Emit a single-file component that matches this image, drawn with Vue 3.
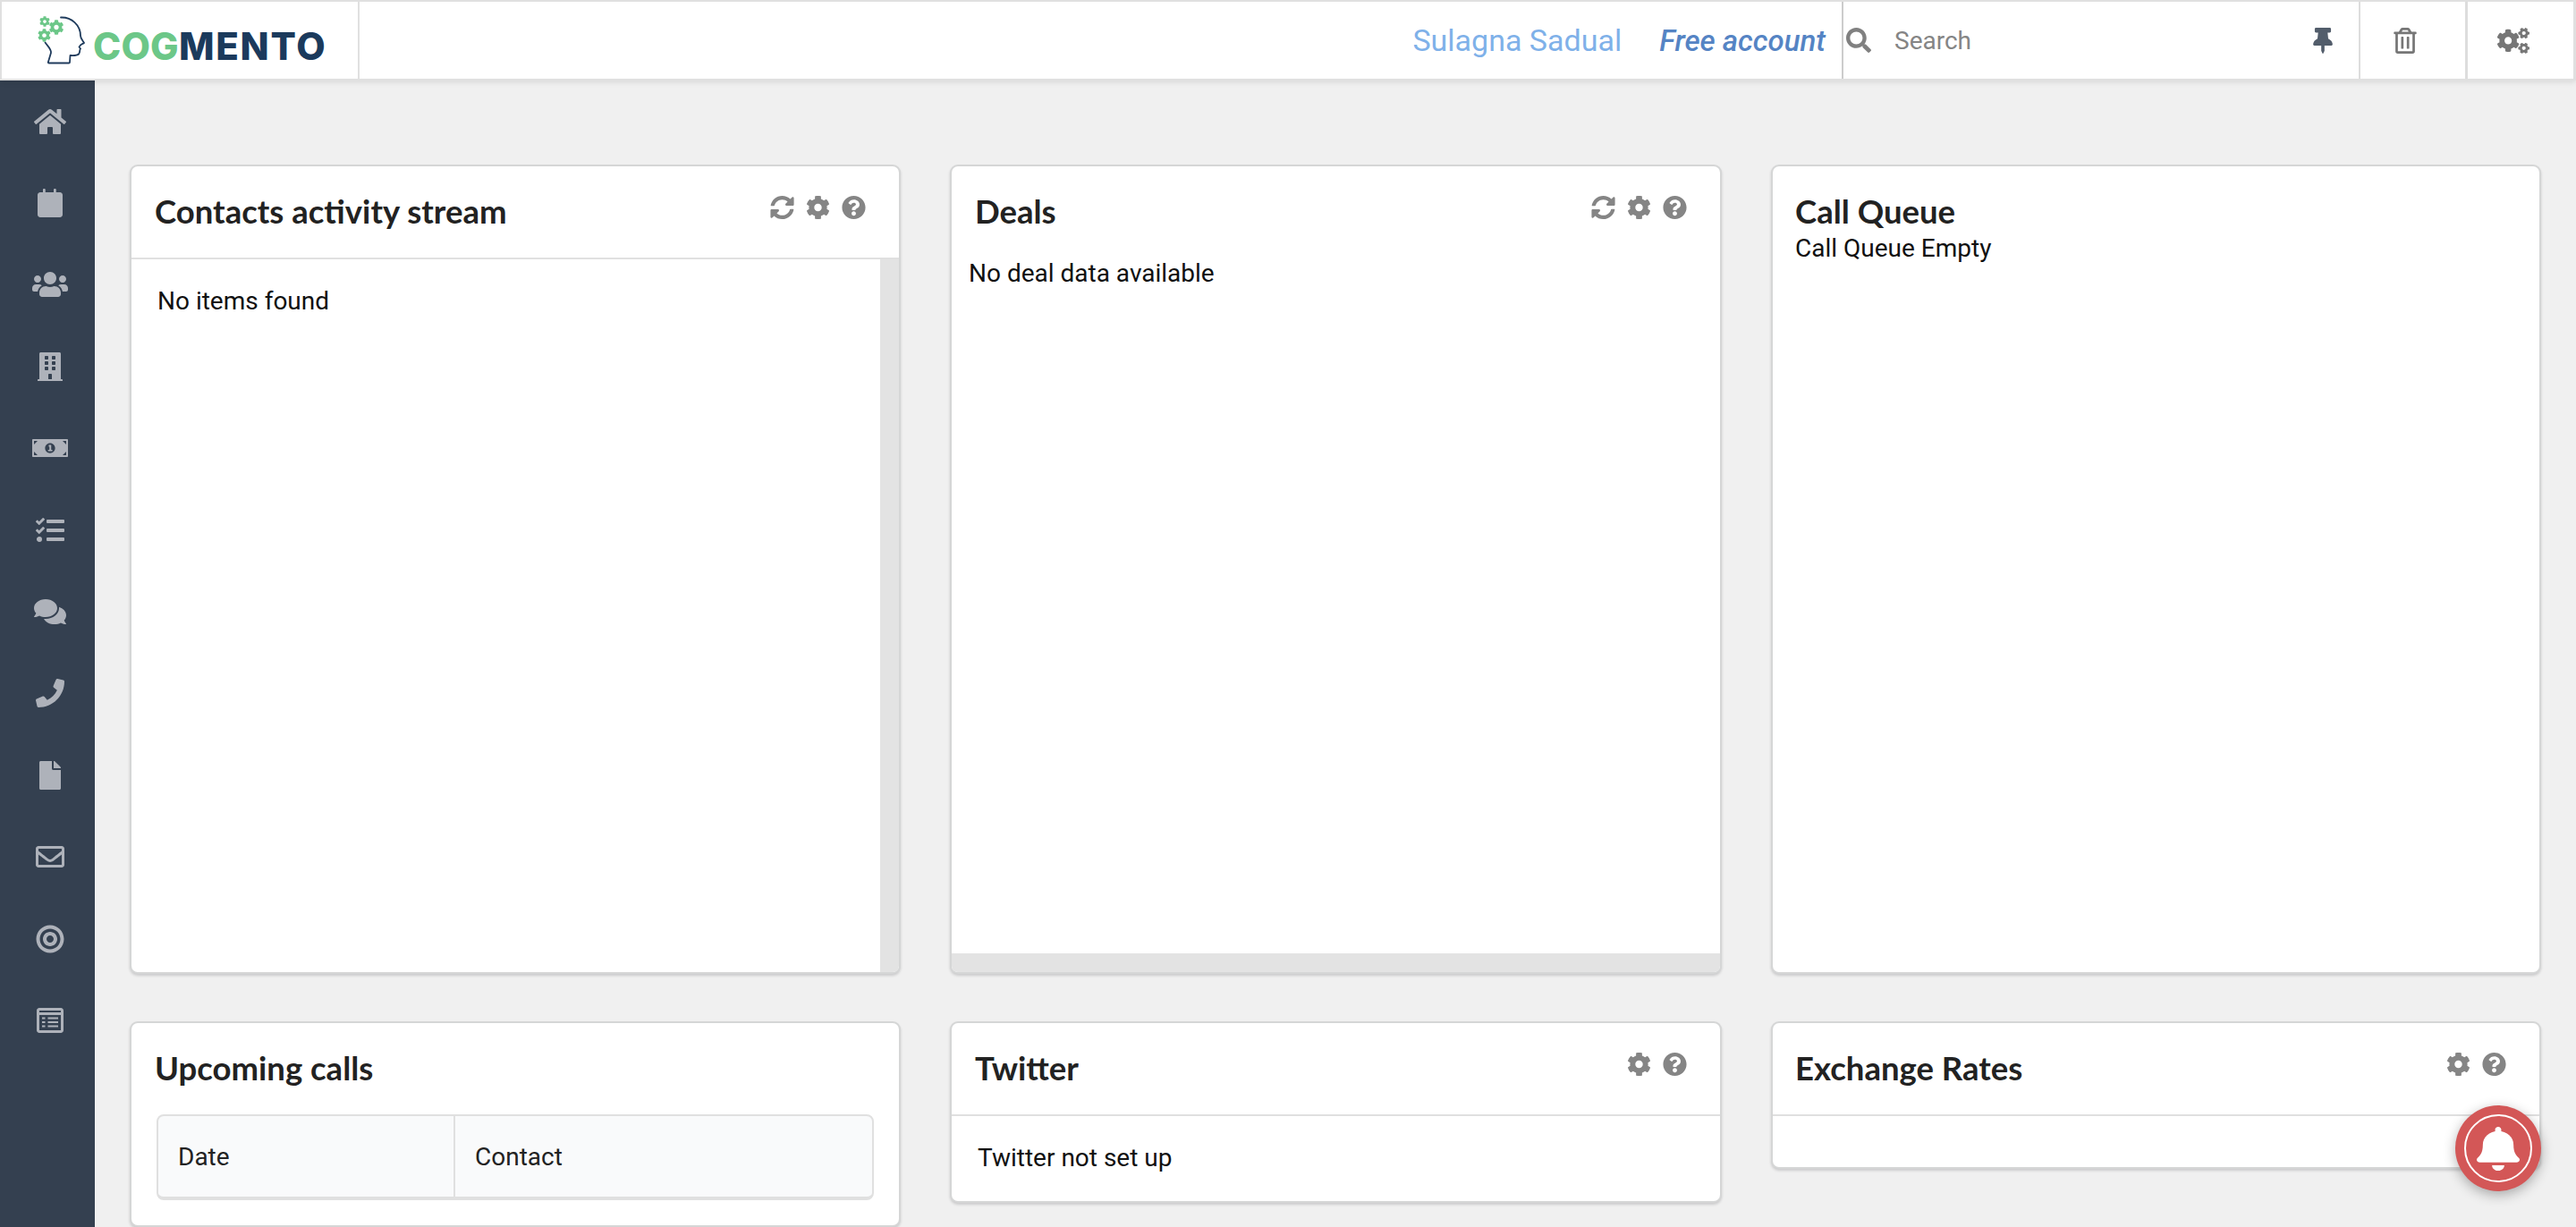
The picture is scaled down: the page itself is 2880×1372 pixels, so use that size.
<script setup>
const p = {
  home: [576, 'M280.37 148.26L96 300.11V464a16 16 0 0 0 16 16l112.06-.29a16 16 0 0 0 15.92-16V368a16 16 0 0 1 16-16h64a16 16 0 0 1 16 16v95.64a16 16 0 0 0 16 16.05L464 480a16 16 0 0 0 16-16V300L295.67 148.26a12.19 12.19 0 0 0-15.3 0zM571.6 251.47L488 182.56V44.05a12 12 0 0 0-12-12h-56a12 12 0 0 0-12 12v72.61L318.47 43a48 48 0 0 0-61 0L4.34 251.47a12 12 0 0 0-1.6 16.9l25.5 31A12 12 0 0 0 45.15 301l235.22-193.74a12.19 12.19 0 0 1 15.3 0L530.9 301a12 12 0 0 0 16.9-1.6l25.5-31a12 12 0 0 0-1.7-16.93z'],
  calendar: [448, 'M0 112c0-26.5 21.5-48 48-48h48V14c0-8 6-14 14-14h16c8 0 14 6 14 14v50h148V14c0-8 6-14 14-14h16c8 0 14 6 14 14v50h68c26.5 0 48 21.5 48 48v352c0 26.5-21.5 48-48 48H48c-26.5 0-48-21.5-48-48z'],
  users: [640, 'M96 224c35.3 0 64-28.7 64-64s-28.7-64-64-64-64 28.7-64 64 28.7 64 64 64zm448 0c35.3 0 64-28.7 64-64s-28.7-64-64-64-64 28.7-64 64 28.7 64 64 64zm32 32h-64c-17.6 0-33.5 7.1-45.1 18.6 40.3 22.1 68.9 62 75.1 109.4h66c17.7 0 32-14.3 32-32v-32c0-35.3-28.7-64-64-64zm-256 0c61.9 0 112-50.1 112-112S381.9 32 320 32 208 82.1 208 144s50.1 112 112 112zm76.8 32h-8.3c-20.8 10-43.9 16-68.5 16s-47.6-6-68.5-16h-8.3C179.6 288 128 339.6 128 403.2V432c0 26.5 21.5 48 48 48h288c26.5 0 48-21.5 48-48v-28.8c0-63.6-51.6-115.2-115.2-115.2zm-223.7-13.4C161.5 263.1 145.6 256 128 256H64c-35.3 0-64 28.7-64 64v32c0 17.7 14.3 32 32 32h65.9c6.3-47.4 34.9-87.3 75.2-109.4z'],
  building: [448, 'M436 480h-20V24c0-13.3-10.7-24-24-24H56C42.7 0 32 10.7 32 24v456H12c-6.6 0-12 5.4-12 12v20h448v-20c0-6.6-5.4-12-12-12zM128 76c0-6.6 5.4-12 12-12h40c6.6 0 12 5.4 12 12v40c0 6.6-5.4 12-12 12h-40c-6.6 0-12-5.4-12-12V76zm0 96c0-6.6 5.4-12 12-12h40c6.6 0 12 5.4 12 12v40c0 6.6-5.4 12-12 12h-40c-6.6 0-12-5.4-12-12v-40zm52 148h-40c-6.6 0-12-5.4-12-12v-40c0-6.6 5.4-12 12-12h40c6.6 0 12 5.4 12 12v40c0 6.6-5.4 12-12 12zm76 160h-64v-84c0-6.6 5.4-12 12-12h40c6.6 0 12 5.4 12 12v84zm64-172c0 6.6-5.4 12-12 12h-40c-6.6 0-12-5.4-12-12v-40c0-6.6 5.4-12 12-12h40c6.6 0 12 5.4 12 12v40zm0-96c0 6.6-5.4 12-12 12h-40c-6.6 0-12-5.4-12-12v-40c0-6.6 5.4-12 12-12h40c6.6 0 12 5.4 12 12v40zm0-96c0 6.6-5.4 12-12 12h-40c-6.6 0-12-5.4-12-12V76c0-6.6 5.4-12 12-12h40c6.6 0 12 5.4 12 12v40z'],
  money: [640, 'M16 96h608c8.800 0 16 7.200 16 16v288c0 8.800-7.200 16-16 16H16c-8.800 0-16-7.200-16-16V112c0-8.800 7.200-16 16-16zM32 128v64l32-32 32-32zM608 128h-64l32 32 32 32zM32 384h64l-32-32-32-32zM608 384v-64l-32 32-32 32zM320 166c-50 0-90 40-90 90s40 90 90 90 90-40 90-90-40-90-90-90zM296 200h44v88h20v24h-76v-24h24v-56h-12z'],
  tasks: [512, 'M139.61 35.5a12 12 0 0 0-17 0L58.93 98.81l-22.7-22.12a12 12 0 0 0-17 0L3.53 92.41a12 12 0 0 0 0 17l47.59 47.4a12.78 12.78 0 0 0 17.61 0l15.59-15.62L156.52 69a12.09 12.09 0 0 0 .09-17zm0 159.19a12 12 0 0 0-17 0l-63.68 63.72-22.7-22.1a12 12 0 0 0-17 0L3.53 252a12 12 0 0 0 0 17L51 316.5a12.77 12.77 0 0 0 17.6 0l15.7-15.69 72.2-72.22a12 12 0 0 0 .09-16.9zM64 368c-26.49 0-48.59 21.5-48.59 48S37.53 464 64 464a48 48 0 0 0 0-96zm432 16H208a16 16 0 0 0-16 16v32a16 16 0 0 0 16 16h288a16 16 0 0 0 16-16v-32a16 16 0 0 0-16-16zm0-320H208a16 16 0 0 0-16 16v32a16 16 0 0 0 16 16h288a16 16 0 0 0 16-16V80a16 16 0 0 0-16-16zm0 160H208a16 16 0 0 0-16 16v32a16 16 0 0 0 16 16h288a16 16 0 0 0 16-16v-32a16 16 0 0 0-16-16z'],
  comments: [576, 'M416 192c0-88.4-93.1-160-208-160S0 103.6 0 192c0 34.3 14.1 65.9 38 92-13.4 30.2-35.5 54.2-35.8 54.5-2.2 2.3-2.8 5.7-1.5 8.7S4.8 352 8 352c36.6 0 66.9-12.3 88.7-25 32.2 15.7 70.3 25 111.3 25 114.9 0 208-71.6 208-160zm122 220c23.9-26 38-57.7 38-92 0-66.9-53.5-124.2-129.3-148.1.9 6.6 1.3 13.3 1.3 20.1 0 105.9-107.7 192-240 192-10.8 0-21.3-.8-31.7-1.9C207.8 439.6 281.8 480 368 480c41 0 79.1-9.2 111.3-25 21.8 12.7 52.1 25 88.7 25 3.2 0 6.1-1.9 7.3-4.8 1.3-2.9.7-6.3-1.5-8.7-.3-.3-22.4-24.2-35.8-54.5z'],
  phone: [512, 'M493.4 24.6l-104-24c-11.3-2.6-22.9 3.3-27.5 13.9l-48 112c-4.2 9.8-1.4 21.3 6.9 28l60.6 49.6c-36 76.7-98.9 140.5-177.2 177.2l-49.6-60.6c-6.8-8.3-18.2-11.1-28-6.9l-112 48C3.9 366.5-2 378.1.6 389.4l24 104C27.1 504.2 36.7 512 48 512c256.1 0 464-207.5 464-464 0-11.2-7.7-20.9-18.6-23.4z'],
  file: [384, 'M224 136V0H24C10.7 0 0 10.7 0 24v464c0 13.3 10.7 24 24 24h336c13.3 0 24-10.7 24-24V160H248c-13.2 0-24-10.8-24-24zm160-14.1v6.1H256V0h6.1c6.4 0 12.5 2.5 17 7l97.9 98c4.500 4.500 7 10.600 7 16.900z'],
  envelope: [512, 'M464 64H48C21.49 64 0 85.49 0 112v288c0 26.51 21.49 48 48 48h416c26.51 0 48-21.49 48-48V112c0-26.51-21.49-48-48-48zm0 48v40.805c-22.422 18.259-58.168 46.651-134.587 106.49-16.841 13.247-50.201 45.072-73.413 44.701-23.208.375-56.579-31.459-73.413-44.701C106.18 199.465 70.425 171.067 48 152.805V112h416zM48 400V214.398c22.914 18.251 55.409 43.862 104.938 82.646 21.857 17.205 60.134 55.186 103.062 54.955 42.717.231 80.509-37.199 103.053-54.947 49.528-38.783 82.032-64.401 104.947-82.653V400H48z'],
  bullseye: [512, 'M256 8C119 8 8 119 8 256s111 248 248 248 248-111 248-248S393 8 256 8zm0 432c-101.700 0-184-82.300-184-184S154.300 72 256 72s184 82.300 184 184-82.300 184-184 184zm0-312c-70.700 0-128 57.300-128 128s57.300 128 128 128 128-57.300 128-128-57.300-128-128-128zm0 192c-35.300 0-64-28.700-64-64s28.700-64 64-64 64 28.700 64 64-28.700 64-64 64z'],
  form: [512, 'M64 32h384c26.500 0 48 21.500 48 48v352c0 26.500-21.500 48-48 48H64c-26.500 0-48-21.500-48-48V80c0-26.500 21.500-48 48-48zm0 48v32h384V80zm0 80v272h384V160zm48 40h56v32h-56zm104 0h184v32H216zM112 272h56v32h-56zm104 0h184v32H216zM112 344h56v32h-56zm104 0h184v32H216z'],
  pin: [384, 'M298.028 214.267L285.793 96H328c13.255 0 24-10.745 24-24V24c0-13.255-10.745-24-24-24H56C42.745 0 32 10.745 32 24v48c0 13.255 10.745 24 24 24h42.207L85.972 214.267C37.465 236.82 0 277.261 0 328c0 13.255 10.745 24 24 24h136v104.007c0 1.242.289 2.467.845 3.578l24 48c2.941 5.882 11.364 5.893 14.311 0l24-48a8.008 8.008 0 0 0 .845-3.578V352h136c13.255 0 24-10.745 24-24-.001-51.183-37.983-91.42-85.973-113.733z'],
  trash: [448, 'M268 416h24a12 12 0 0 0 12-12V188a12 12 0 0 0-12-12h-24a12 12 0 0 0-12 12v216a12 12 0 0 0 12 12zM432 80h-82.410l-34-56.700A48 48 0 0 0 274.410 0H173.590a48 48 0 0 0-41.160 23.300L98.410 80H16A16 16 0 0 0 0 96v16a16 16 0 0 0 16 16h16v336a48 48 0 0 0 48 48h288a48 48 0 0 0 48-48V128h16a16 16 0 0 0 16-16V96a16 16 0 0 0-16-16zM171.840 50.910A6 6 0 0 1 177 48h94a6 6 0 0 1 5.150 2.910L293.610 80H154.390zM368 464H80V128h288zm-212-48h24a12 12 0 0 0 12-12V188a12 12 0 0 0-12-12h-24a12 12 0 0 0-12 12v216a12 12 0 0 0 12 12z'],
  cogs: [640, 'M512.1 191l-8.2 14.3c-3 5.3-9.4 7.500-15.100 5.400-11.800-4.400-22.600-10.700-32.100-18.600-4.600-3.800-5.800-10.500-2.800-15.700l8.200-14.300c-6.900-8-12.300-17.300-15.900-27.400h-16.500c-6 0-11.200-4.300-12.200-10.300-2-12-2.100-24.600 0-37.100 1-6 6.200-10.400 12.200-10.400h16.500c3.600-10.100 9-19.400 15.900-27.400l-8.200-14.300c-3-5.200-1.900-11.900 2.800-15.700 9.500-7.900 20.400-14.200 32.100-18.600 5.700-2.100 12.100.1 15.100 5.400l8.200 14.300c10.500-1.900 21.200-1.900 31.700 0L552 6.300c3-5.300 9.400-7.500 15.100-5.400 11.800 4.400 22.600 10.700 32.100 18.600 4.600 3.800 5.800 10.500 2.800 15.700l-8.200 14.300c6.900 8 12.300 17.300 15.900 27.400h16.500c6 0 11.200 4.300 12.200 10.300 2 12 2.100 24.600 0 37.100-1 6-6.200 10.400-12.200 10.400h-16.500c-3.600 10.100-9 19.400-15.900 27.400l8.200 14.300c3 5.200 1.900 11.900-2.800 15.700-9.500 7.900-20.400 14.200-32.100 18.600-5.700 2.100-12.100-.1-15.100-5.400l-8.200-14.300c-10.400 1.900-21.200 1.900-31.700 0zm-10.500-58.800c38.500 29.600 82.400-14.300 52.800-52.800-38.500-29.700-82.400 14.300-52.800 52.800zM386.300 286.100l33.700 16.800c10.100 5.800 14.500 18.100 10.500 29.100-8.900 24.200-26.400 46.400-42.600 65.800-7.400 8.900-20.200 11.100-30.300 5.300l-29.100-16.800c-16 13.700-34.600 24.600-54.900 31.700v33.600c0 11.600-8.300 21.600-19.700 23.600-24.600 4.200-50.400 4.400-75.900 0-11.500-2-20-11.900-20-23.600V418c-20.300-7.200-38.900-18-54.900-31.700L74 403c-10 5.800-22.900 3.600-30.300-5.300-16.200-19.400-33.300-41.600-42.200-65.700-4-10.900.4-23.200 10.500-29.100l33.300-16.800c-3.900-20.900-3.900-42.400 0-63.400L12 205.800c-10.100-5.800-14.600-18.100-10.500-29 8.900-24.200 26-46.400 42.200-65.800 7.400-8.900 20.200-11.100 30.300-5.300l29.100 16.800c16-13.700 34.600-24.600 54.900-31.700V57.100c0-11.500 8.200-21.500 19.600-23.500 24.600-4.200 50.500-4.400 76-.1 11.500 2 20 11.900 20 23.600v33.600c20.300 7.200 38.900 18 54.900 31.700l29.100-16.800c10-5.800 22.900-3.600 30.300 5.300 16.200 19.400 33.200 41.600 42.100 65.800 4 10.900.1 23.200-10 29.100l-33.700 16.800c3.900 21 3.900 42.500 0 63.500zm-117.600 21.100c59.200-77-28.700-164.900-105.700-105.700-59.200 77 28.700 164.900 105.700 105.700zm243.400 182.700l-8.200 14.300c-3 5.300-9.400 7.500-15.100 5.400-11.800-4.400-22.600-10.700-32.100-18.600-4.600-3.800-5.800-10.500-2.800-15.700l8.200-14.300c-6.900-8-12.300-17.300-15.900-27.400h-16.500c-6 0-11.200-4.300-12.200-10.300-2-12-2.100-24.600 0-37.100 1-6 6.200-10.400 12.200-10.400h16.500c3.600-10.100 9-19.400 15.900-27.400l-8.200-14.300c-3-5.200-1.900-11.900 2.800-15.700 9.500-7.900 20.400-14.200 32.100-18.600 5.700-2.100 12.100.1 15.100 5.400l8.200 14.300c10.500-1.900 21.200-1.900 31.700 0l8.200-14.300c3-5.300 9.400-7.500 15.100-5.400 11.800 4.400 22.600 10.700 32.100 18.600 4.600 3.800 5.800 10.500 2.800 15.700l-8.200 14.300c6.900 8 12.300 17.300 15.900 27.400h16.500c6 0 11.200 4.300 12.200 10.300 2 12 2.100 24.600 0 37.100-1 6-6.200 10.400-12.200 10.400h-16.500c-3.600 10.100-9 19.400-15.900 27.400l8.200 14.300c3 5.200 1.900 11.900-2.800 15.700-9.500 7.900-20.400 14.200-32.100 18.600-5.700 2.100-12.100-.1-15.100-5.400l-8.200-14.300c-10.400 1.900-21.200 1.900-31.700 0zM501.600 431c38.500 29.600 82.400-14.300 52.800-52.800-38.500-29.600-82.400 14.300-52.800 52.800z'],
  sync: [512, 'M370.720 133.280C339.458 104.008 298.888 87.962 255.848 88c-77.458.068-144.328 53.178-162.791 126.850-1.344 5.363-6.122 9.150-11.651 9.150H24.103c-7.498 0-13.194-6.807-11.807-14.176C33.933 94.924 134.813 8 256 8c66.448 0 126.791 26.136 171.315 68.685L463.030 40.970C478.149 25.851 504 36.559 504 57.941V192c0 13.255-10.745 24-24 24H345.941c-21.382 0-32.090-25.851-16.971-40.971l41.750-41.749zM32 296h134.059c21.382 0 32.090 25.851 16.971 40.971l-41.750 41.750c31.262 29.273 71.835 45.319 114.876 45.280 77.418-.07 144.315-53.144 162.787-126.849 1.344-5.363 6.122-9.150 11.651-9.150h57.304c7.498 0 13.194 6.807 11.807 14.176C478.067 417.076 377.187 504 256 504c-66.448 0-126.791-26.136-171.315-68.685L48.970 471.030C33.851 486.149 8 475.441 8 454.059V320c0-13.255 10.745-24 24-24z'],
  cog: [512, 'M487.400 315.700l-42.600-24.600c4.300-23.200 4.300-47 0-70.200l42.600-24.600c4.900-2.800 7.100-8.600 5.500-14-11.100-35.600-30-67.800-54.700-94.600-3.800-4.100-10-5.100-14.800-2.300L380.800 110c-17.900-15.400-38.500-27.300-60.800-35.100V25.800c0-5.600-3.900-10.500-9.400-11.700-36.700-8.200-74.300-7.800-109.200 0-5.500 1.200-9.400 6.100-9.400 11.700V75c-22.200 7.900-42.800 19.800-60.800 35.100L88.700 85.500c-4.900-2.800-11-1.900-14.800 2.300-24.700 26.700-43.600 58.900-54.700 94.600-1.700 5.400.6 11.200 5.500 14L67.300 221c-4.300 23.200-4.300 47 0 70.200l-42.600 24.600c-4.900 2.800-7.100 8.600-5.500 14 11.100 35.600 30 67.800 54.700 94.600 3.800 4.100 10 5.100 14.800 2.300l42.600-24.600c17.900 15.400 38.500 27.300 60.800 35.100v49.200c0 5.600 3.900 10.500 9.400 11.700 36.700 8.200 74.300 7.800 109.200 0 5.500-1.200 9.400-6.100 9.400-11.700v-49.200c22.200-7.900 42.800-19.800 60.800-35.100l42.600 24.600c4.900 2.800 11 1.900 14.800-2.300 24.700-26.700 43.600-58.900 54.700-94.600 1.500-5.500-.7-11.300-5.600-14.100zM256 336c-44.100 0-80-35.900-80-80s35.900-80 80-80 80 35.900 80 80-35.900 80-80 80z'],
  help: [512, 'M504 256c0 136.997-111.043 248-248 248S8 392.997 8 256C8 119.083 119.043 8 256 8s248 111.083 248 248zM262.655 90c-54.497 0-89.255 22.957-116.549 63.758-3.536 5.286-2.353 12.415 2.715 16.258l34.699 26.310c5.205 3.947 12.621 3.008 16.665-2.122 17.864-22.658 30.113-35.797 57.303-35.797 20.429 0 45.698 13.148 45.698 32.958 0 14.976-12.363 22.667-32.534 33.976C247.128 238.528 216 254.941 216 296v4c0 6.627 5.373 12 12 12h56c6.627 0 12-5.373 12-12v-1.333c0-28.462 83.186-29.647 83.186-106.667 0-58.002-60.165-102-116.531-102zM256 338c-25.365 0-46 20.635-46 46 0 25.364 20.635 46 46 46s46-20.636 46-46c0-25.365-20.635-46-46-46z'],
  search: [512, 'M505 442.700L405.300 343c-4.500-4.500-10.600-7-17-7H372c27.600-35.300 44-79.700 44-128C416 93.100 322.900 0 208 0S0 93.100 0 208s93.100 208 208 208c48.300 0 92.700-16.400 128-44v16.300c0 6.400 2.500 12.500 7 17l99.700 99.700c9.400 9.400 24.600 9.400 33.900 0l28.300-28.300c9.400-9.400 9.400-24.600.1-34zM208 336c-70.700 0-128-57.200-128-128 0-70.700 57.200-128 128-128 70.700 0 128 57.200 128 128 0 70.700-57.200 128-128 128z'],
  bell: [448, 'M224 512c35.320 0 63.970-28.650 63.970-64H160.030c0 35.350 28.650 64 63.970 64zm215.390-149.710c-19.320-20.760-55.470-51.990-55.470-154.290 0-77.700-54.480-139.900-127.940-155.160V32c0-17.670-14.320-32-31.980-32s-31.980 14.330-31.980 32v20.840C118.560 68.100 64.080 130.300 64.080 208c0 102.300-36.150 133.530-55.470 154.290-6 6.450-8.660 14.160-8.610 21.710.11 16.400 12.980 32 32.100 32h383.800c19.120 0 32-15.600 32.100-32 .05-7.550-2.610-15.270-8.610-21.710z']
}
const navIcons = ['home', 'calendar', 'users', 'building', 'money', 'tasks', 'comments', 'phone', 'file', 'envelope', 'bullseye', 'form']
const gears = [
  { x: 54.500, y: 22, s: 17 },
  { x: 44, y: 18, s: 12 },
  { x: 42, y: 32, s: 15 }
]
const vb = (n) => `0 0 ${p[n][0]} 512`
</script>

<template>
  <div class="app">
    <header class="topbar">
      <div class="brand">
        <svg class="head" viewBox="40 14 60 60" width="60" height="60">
          <path d="M68 19.500C80 19 90 28 90 40C90 43 93 46 94 48C93 49 90.500 49.500 90 50.500L88.500 52.500L90 54.500C88.500 55.500 90 58.500 88 60.500C86 62.500 81 62 78.500 62L78 69.500C78 70 77.500 70.500 77 70.500L55 70.500C54 70.500 53.500 70 54 69L57 59C57.500 55 53.500 52 50.500 47.500" fill="none" stroke="#1f3b5c" stroke-width="1.800" stroke-linecap="round" stroke-linejoin="round" />
          <svg v-for="g in gears" :key="g.x + g.y" :x="g.x" :y="g.y" :width="g.s" :height="g.s" viewBox="0 0 512 512"><path :d="p.cog[1]" fill="#6cc788" /></svg>
        </svg>
        <span class="word"><span class="cog">COG</span><span class="mento">MENTO</span></span>
      </div>
      <div class="who">
        <span class="name">Sulagna Sadual</span>
        <span class="plan">Free account</span>
      </div>
      <div class="searchbox">
        <svg class="i-search" :viewBox="vb('search')"><path :d="p.search[1]" /></svg>
        <span class="placeholder">Search</span>
        <svg class="i-pin" :viewBox="vb('pin')"><path :d="p.pin[1]" /></svg>
      </div>
      <div class="tool trash"><svg class="i-trash" :viewBox="vb('trash')"><path :d="p.trash[1]" /></svg></div>
      <div class="tool cogs"><svg class="i-cogs" :viewBox="vb('cogs')"><path :d="p.cogs[1]" /></svg></div>
    </header>

    <div class="below">
      <nav class="sidebar">
        <div v-for="n in navIcons" :key="n" class="nav-item">
          <svg :viewBox="vb(n)"><path :d="p[n][1]" fill-rule="evenodd" /></svg>
        </div>
      </nav>

      <main class="main">
        <section class="card tall">
          <div class="card-head ruled">
            <h2>Contacts activity stream</h2>
            <div class="acts">
              <svg :viewBox="vb('sync')"><path :d="p.sync[1]" /></svg>
              <svg :viewBox="vb('cog')"><path :d="p.cog[1]" /></svg>
              <svg :viewBox="vb('help')"><path :d="p.help[1]" /></svg>
            </div>
          </div>
          <div class="scroll-y">
            <p class="stream-text">No items found</p>
            <div class="track-y"></div>
          </div>
        </section>

        <section class="card tall">
          <div class="card-head">
            <h2>Deals</h2>
            <div class="acts">
              <svg :viewBox="vb('sync')"><path :d="p.sync[1]" /></svg>
              <svg :viewBox="vb('cog')"><path :d="p.cog[1]" /></svg>
              <svg :viewBox="vb('help')"><path :d="p.help[1]" /></svg>
            </div>
          </div>
          <p class="deal-text">No deal data available</p>
          <div class="track-x"></div>
        </section>

        <section class="card tall queue">
          <h2>Call Queue</h2>
          <p>Call Queue Empty</p>
        </section>

        <section class="card upcoming">
          <h2>Upcoming calls</h2>
          <div class="thead">
            <div class="th date">Date</div>
            <div class="th">Contact</div>
          </div>
        </section>

        <section class="card short">
          <div class="card-head ruled">
            <h2>Twitter</h2>
            <div class="acts">
              <svg :viewBox="vb('cog')"><path :d="p.cog[1]" /></svg>
              <svg :viewBox="vb('help')"><path :d="p.help[1]" /></svg>
            </div>
          </div>
          <p class="twitter-text">Twitter not set up</p>
        </section>

        <section class="card short">
          <div class="card-head ruled third">
            <h2>Exchange Rates</h2>
            <div class="acts">
              <svg :viewBox="vb('cog')"><path :d="p.cog[1]" /></svg>
              <svg :viewBox="vb('help')"><path :d="p.help[1]" /></svg>
            </div>
          </div>
          <div class="rates"></div>
        </section>
      </main>
    </div>

    <div class="bell">
      <div class="ring">
        <svg :viewBox="vb('bell')" preserveAspectRatio="none"><path :d="p.bell[1]" /></svg>
      </div>
    </div>
  </div>
</template>

<style>
html, body { margin: 0; padding: 0; overflow: hidden; background: #f0f0f0; }
</style>

<style scoped>
.app { position: relative; width: 2880px; height: 1372px; overflow: hidden; background: #f0f0f0; font-family: Roboto, "Liberation Sans", sans-serif; color: #1f1f1f; }
.topbar { position: relative; z-index: 2; box-sizing: border-box; display: flex; align-items: stretch; height: 90px; background: #fff; border: 2px solid #e0e0e0; border-right-width: 3px; box-shadow: 0 2px 6px rgba(0, 0, 0, .1); }
.brand { box-sizing: border-box; width: 400px; flex: none; display: flex; border-right: 2px solid #e0e0e0; position: relative; }
.head { position: absolute; left: 38px; top: 12px; }
.word { position: absolute; left: 102px; top: 25px; font: 800 42px/50px Inter, sans-serif; white-space: nowrap; }
.cog { color: #6cc788; letter-spacing: .2px; }
.mento { color: #1b3a5c; letter-spacing: 1.700px; }
.who { flex: 1; display: flex; align-items: center; justify-content: flex-end; white-space: nowrap; }
.name { font-size: 34px; color: #7fb1e9; margin-right: 42px; }
.plan { font-size: 33px; font-style: italic; font-weight: 500; color: #5584c4; margin-right: 18px; }
.searchbox { box-sizing: border-box; width: 578px; flex: none; display: flex; align-items: center; border-left: 2px solid #ccc; }
.i-search { width: 28px; height: 28px; margin-left: 3px; fill: #808080; }
.placeholder { font-size: 28px; color: #858585; margin-left: 26px; flex: 1; }
.i-pin { width: 22px; height: 29px; margin-right: 29px; fill: #525d6b; }
.tool { box-sizing: border-box; flex: none; display: flex; align-items: center; border-left: 2px solid #ddd; }
.trash { width: 119px; padding-left: 37px; }
.cogs { width: 121px; border-left-width: 3px; padding-left: 33px; }
.i-trash { width: 26px; height: 29px; fill: #767676; }
.i-cogs { width: 36px; height: 29px; fill: #767676; }
.below { display: flex; height: 1282px; }
.sidebar { width: 106px; flex: none; background: #344050; display: flex; flex-direction: column; }
.nav-item { height: 91.4px; flex: none; display: flex; align-items: center; justify-content: center; padding-left: 5px; }
.nav-item svg { height: 32px; width: auto; max-width: 40px; fill: #aeb2ba; }
.main { flex: 1; box-sizing: border-box; padding: 94px 39px 0; display: grid; grid-template-columns: 862px 863px 861px; column-gap: 55px; row-gap: 53px; grid-template-rows: 905px auto; align-items: start; }
.card { box-sizing: border-box; background: #fff; border: 2px solid rgba(34, 36, 38, .19); border-radius: 9px; box-shadow: 0 2px 3px rgba(34, 36, 38, .18); overflow: hidden; display: flex; flex-direction: column; }
.tall { height: 905px; }
h2 { margin: 0; font: 700 36.500px/44px Lato, sans-serif; color: #222; }
p { margin: 0; font-size: 28px; line-height: 36px; color: #111; }
.card-head { box-sizing: border-box; height: 102px; flex: none; display: flex; justify-content: space-between; padding: 28px 37px 0 26px; }
.ruled { border-bottom: 2px solid #e0e0e0; height: 104px; }
.third { padding-left: 25px; }
.acts { display: flex; gap: 13px; margin-top: 4px; justify-content: flex-end; }
.acts svg { width: 27px; height: 28px; fill: #858585; }
.scroll-y { position: relative; flex: 1; }
.stream-text { padding: 29px 0 0 29px; }
.track-y { position: absolute; top: 0; right: 0; bottom: 0; width: 21px; background: #e3e3e3; }
.deal-text { padding-left: 19px; flex: 1; }
.track-x { height: 21px; background: #e3e3e3; flex: none; }
.queue { padding: 28px 0 0 25px; }
.queue p { margin-top: 2px; }
.upcoming { padding: 28px 28px 0; height: 230px; }
.upcoming h2 { margin-left: -2px; }
.thead { margin-top: 30px; display: grid; grid-template-columns: 332px 1fr; height: 96px; background: #f9fafb; border: 2px solid #e0e0e0; border-bottom-width: 4px; border-radius: 8px; box-sizing: border-box; flex: none; }
.th { display: flex; align-items: center; padding-left: 22px; font-size: 28px; color: #222; }
.date { border-right: 2px solid #e0e0e0; }
.twitter-text { padding: 29px 0 0 29px; line-height: 36px; height: 95px; box-sizing: border-box; }
.rates { height: 57px; }
.bell { position: absolute; z-index: 3; left: 2745px; top: 1236px; width: 96px; height: 96px; border-radius: 50%; background: #d35757; box-shadow: 0 4px 14px rgba(0, 0, 0, .3); display: flex; align-items: center; justify-content: center; }
.ring { box-sizing: border-box; width: 76px; height: 76px; border-radius: 50%; border: 2px solid #fff; display: flex; align-items: center; justify-content: center; }
.ring svg { width: 48px; height: 49px; fill: #fff; }
</style>
